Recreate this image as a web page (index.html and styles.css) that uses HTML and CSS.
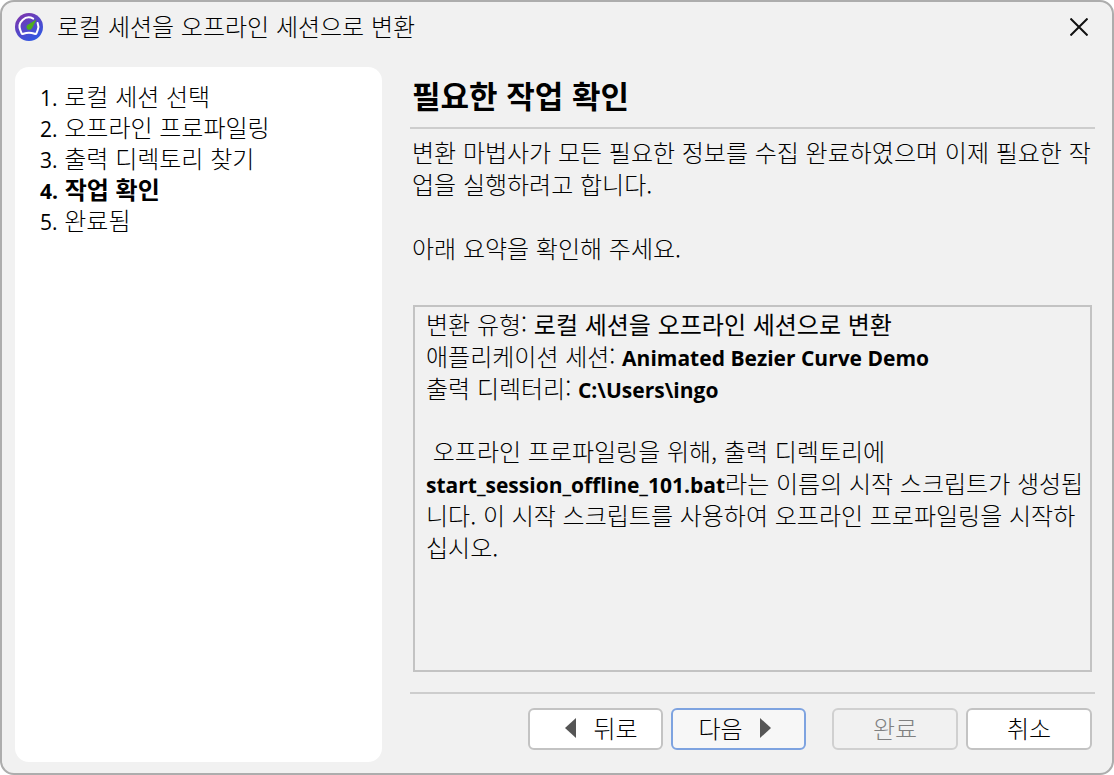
FILE: index.html
```html
<!DOCTYPE html>
<html lang="ko">

<head>
    <meta charset="UTF-8">
    <meta name="viewport" content="width=device-width, initial-scale=1.0">
    <title>로컬 세션을 오프라인 세션으로 변환</title>
    <link rel="stylesheet" href="styles.css">
</head>

<body>
    <div class="window">
        <header class="titlebar">
            <svg class="logo" viewBox="0 0 28 28" aria-hidden="true">
                <defs>
                    <linearGradient id="logoBg" x1="0.2" y1="0" x2="0.8" y2="1">
                        <stop offset="0" stop-color="#7d35ad" />
                        <stop offset="1" stop-color="#2b5ae6" />
                    </linearGradient>
                </defs>
                <circle cx="14" cy="14" r="14" fill="url(#logoBg)" />
                <path d="M18.2 5.6A9.2 9.2 0 0 0 5.4 17.4L6.6 20.4Q7.1 21.2 8.4 20.7Q14 18.8 19.6 20.7Q20.9 21.2 21.4 20.4L22.6 17.4A9.2 9.2 0 0 0 22.6 10"
                    fill="none" stroke="#fff" stroke-width="2" stroke-linecap="round" />
                <path d="M21.4 6.4L17.2 15Q15.4 17.8 12.6 16.4Q10.4 14.2 12.4 12Z" fill="#4fae1e" />
            </svg>
            <span class="title">로컬 세션을 오프라인 세션으로 변환</span>
            <button class="close" type="button" aria-label="닫기">
                <svg viewBox="0 0 18 18" aria-hidden="true">
                    <path d="M0.5 0.5L17.5 17.5M17.5 0.5L0.5 17.5" stroke="#111" stroke-width="2" />
                </svg>
            </button>
        </header>

        <div class="wizard">
            <nav class="steps">
                <ol>
                    <li><span class="num">1.</span> 로컬 세션 선택</li>
                    <li><span class="num">2.</span> 오프라인 프로파일링</li>
                    <li><span class="num">3.</span> 출력 디렉토리 찾기</li>
                    <li class="current"><span class="num">4.</span> 작업 확인</li>
                    <li><span class="num">5.</span> 완료됨</li>
                </ol>
            </nav>

            <main class="page">
                <h1>필요한 작업 확인</h1>
                <div class="intro">
                    <p>변환 마법사가 모든 필요한 정보를 수집 완료하였으며 이제 필요한 작업을 실행하려고 합니다.</p>
                    <p>아래 요약을 확인해 주세요.</p>
                </div>
                <div class="summary">
                    <p>변환 유형: <b>로컬 세션을 오프라인 세션으로 변환</b><br>
                        애플리케이션 세션: <b class="latin">Animated Bezier Curve Demo</b><br>
                        출력 디렉터리: <b class="latin">C:\Users\ingo</b></p>
                    <p>&nbsp;오프라인 프로파일링을 위해, 출력 디렉토리에 <b class="latin">start_session_offline_101.bat</b>라는 이름의 시작 스크립트가 생성됩니다. 이 시작 스크립트를 사용하여 오프라인 프로파일링을 시작하십시오.</p>
                </div>
                <footer class="buttons">
                    <button class="btn nav back" type="button">
                        <svg class="arrow" viewBox="0 0 11 20" aria-hidden="true"><path d="M11 0V20L0 10Z" fill="#555" /></svg>
                        뒤로
                    </button>
                    <button class="btn nav next" type="button">
                        다음
                        <svg class="arrow" viewBox="0 0 11 20" aria-hidden="true"><path d="M0 0V20L11 10Z" fill="#555" /></svg>
                    </button>
                    <button class="btn finish" type="button" disabled>완료</button>
                    <button class="btn" type="button">취소</button>
                </footer>
            </main>
        </div>
    </div>
</body>

</html>
```

FILE: styles.css
```css
* {
    margin: 0;
    padding: 0;
    box-sizing: border-box;
}

body {
    background-color: #fff;
    color: #000;
    font-family: "Noto Sans CJK KR", sans-serif;
    font-size: 24px;
    font-weight: 300;
    line-height: 32px;
}

.window {
    display: flex;
    flex-direction: column;
    min-height: 100vh;
    border: 2px solid #adadad;
    border-radius: 14px;
    background-color: #f1f1f1;
}

.titlebar {
    display: flex;
    align-items: center;
    height: 50px;
    padding: 0 21px 0 13px;
}

.logo {
    width: 28px;
    height: 28px;
    margin-right: 14px;
}

.title {
    flex: 1;
    padding-bottom: 2px;
}

.close {
    display: flex;
    align-items: center;
    justify-content: center;
    width: 24px;
    height: 24px;
    border: none;
    background: none;
}

.close svg {
    width: 18px;
    height: 18px;
}

.wizard {
    flex: 1;
    display: grid;
    grid-template-columns: 367px 1fr;
    gap: 28px;
    padding: 15px 17px 11px 13px;
}

.steps {
    padding: 13px 25px;
    border-radius: 14px;
    background-color: #fff;
    line-height: 31px;
}

.steps ol {
    list-style: none;
}

.current {
    font-weight: 700;
}

.num,
.latin {
    font-family: "Open Sans", "Noto Sans", sans-serif;
    font-size: 21px;
    line-height: 24px;
}

.num {
    font-weight: 400;
}

.current .num {
    font-weight: 700;
}

.page {
    display: flex;
    flex-direction: column;
}

h1 {
    padding: 5px 2px 9px;
    border-bottom: 2px solid #cdcdcd;
    font-size: 31px;
    font-weight: 700;
    line-height: 46px;
}

.intro {
    padding: 7px 2px 41px;
}

p + p {
    margin-top: 31px;
}

.summary {
    flex: 1;
    margin: 0 3px 20px;
    padding: 1px 4px 1px 11px;
    border: 2px solid #c3c3c3;
}

.intro p + p {
    margin-top: 32px;
}

.latin {
    font-weight: 700;
}

.buttons {
    display: flex;
    justify-content: flex-end;
    gap: 8px;
    padding: 14px 3px 12px;
    border-top: 2px solid #cdcdcd;
}

.btn {
    display: flex;
    align-items: center;
    justify-content: center;
    width: 126px;
    height: 42px;
    padding-bottom: 2px;
    border: 2px solid #c3c3c3;
    border-radius: 6px;
    background-color: #fff;
    color: #000;
    font: inherit;
}

.nav {
    gap: 17px;
    width: 135px;
}

.back {
    padding-left: 12px;
}

.next {
    padding-right: 8px;
    border-color: #7ea3e0;
    background-color: #f7f7f7;
}

.finish {
    margin-left: 18px;
}

.btn:disabled {
    border-color: #d0d0d0;
    background-color: #f1f1f1;
    color: #808080;
}

.arrow {
    width: 11px;
    height: 20px;
}
```
